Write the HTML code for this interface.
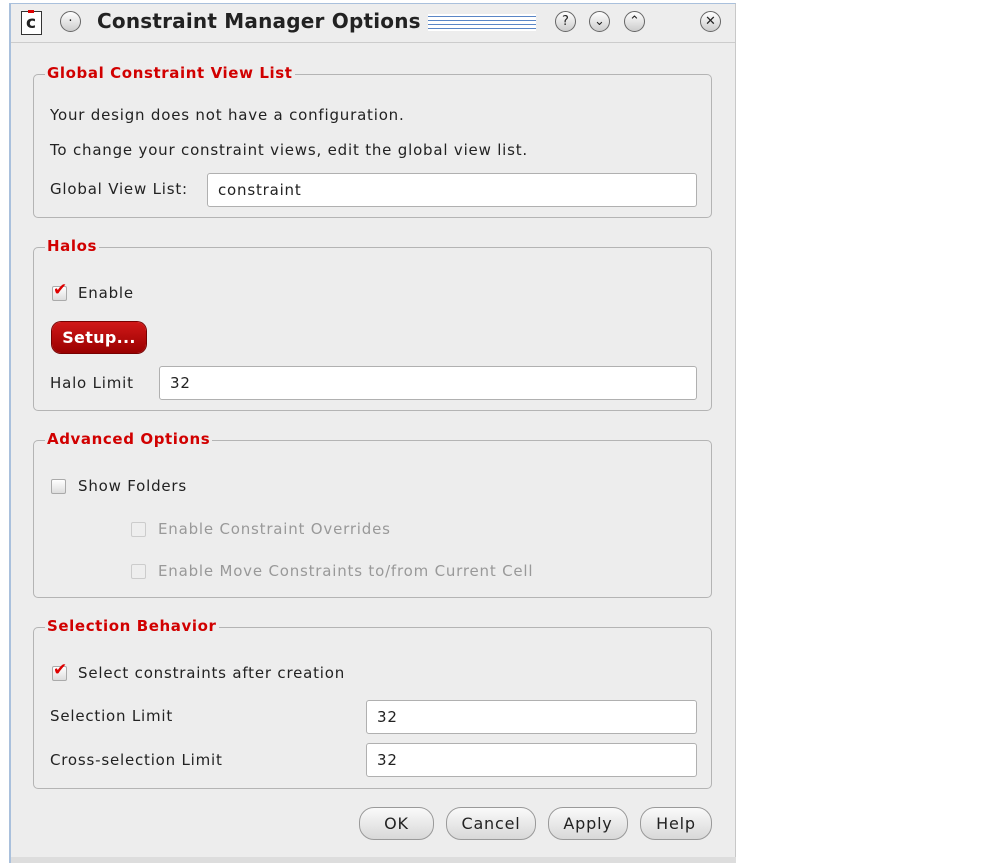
<!DOCTYPE html>
<html><head><style>
body{margin:0;width:992px;height:868px;background:#fff;position:relative;font-family:"DejaVu Sans","Liberation Sans",sans-serif;font-size:15px;color:#222;overflow:hidden;letter-spacing:0.8px}
.a{position:absolute}
#win{left:9px;top:3px;width:727px;height:860px;background:#ededed;border-left:2px solid #a9c0dc;border-right:1px solid #c8c8c8;border-top:1px solid #a9c0dc;box-sizing:border-box}
.grp{position:absolute;left:33px;width:679px;border:1px solid #b4b4b4;border-radius:5px;box-sizing:border-box}
.lg{position:absolute;left:45px;background:#ededed;color:#d10000;font-weight:bold;font-size:15px;padding:0 2px;letter-spacing:0.6px}
.in{position:absolute;background:#fff;border:1px solid #b0b0b0;border-radius:3px;height:34px;box-sizing:border-box;padding:7px 0 0 10px;font-size:15px}
.cb{position:absolute;width:15px;height:15px;border:1px solid #aaa;border-radius:2px;background:linear-gradient(#fff,#ddd);box-sizing:border-box}
.dis{color:#999}
.btn{position:absolute;top:807px;height:33px;border:1px solid #9a9a9a;border-radius:15px;background:linear-gradient(#fafafa,#d8d8d8);box-sizing:border-box;text-align:center;line-height:31px;font-size:16px}
.ci{position:absolute;top:11px;width:21px;height:21px;border:1px solid #666;border-radius:50%;box-sizing:border-box;background:linear-gradient(#fff,#ccc);text-align:center;font-size:13px;line-height:19px;letter-spacing:0}
</style></head><body>
<div id="win" class="a"></div>
<div class="a" style="left:21px;top:11px;width:19px;height:22px;border:1px solid #333;background:#fff;font-weight:bold;font-size:17px;text-align:center;line-height:22px">c</div>
<div class="a" style="left:28px;top:10px;width:6px;height:3px;background:#d00"></div>
<div class="ci" style="left:60px">·</div>
<div class="a" style="left:97px;top:9px;font-weight:bold;font-size:20px;color:#222;letter-spacing:0.2px">Constraint Manager Options</div>
<div class="a" style="left:428px;top:14px;width:108px;height:17px;background:repeating-linear-gradient(#fff 0 2px,#5a86c6 2px 3px,#fff 3px 4px)"></div>
<div class="ci" style="left:555px">?</div>
<div class="ci" style="left:589px">⌄</div>
<div class="ci" style="left:624px">⌃</div>
<div class="ci" style="left:700px">✕</div>
<div class="a" style="left:11px;top:42px;width:724px;height:1px;background:#ccc"></div>

<div class="grp" style="top:74px;height:144px"></div>
<div class="lg" style="top:64px">Global Constraint View List</div>
<div class="a" style="left:50px;top:106px">Your design does not have a configuration.</div>
<div class="a" style="left:50px;top:141px">To change your constraint views, edit the global view list.</div>
<div class="a" style="left:50px;top:180px">Global View List:</div>
<div class="in" style="left:207px;top:173px;width:490px">constraint</div>

<div class="grp" style="top:247px;height:164px"></div>
<div class="lg" style="top:237px">Halos</div>
<div class="cb" style="left:52px;top:286px"></div>
<div class="a" style="left:53px;top:280px;color:#d00;font-size:17px;font-weight:bold">✔</div>
<div class="a" style="left:78px;top:284px">Enable</div>
<div class="a" style="left:52px;top:322px;width:94px;height:31px;border-radius:9px;background:linear-gradient(#d01818,#9a0000);box-shadow:0 0 0 1px #700;color:#fff;font-weight:bold;font-size:16px;text-align:center;line-height:31px;letter-spacing:0.3px">Setup...</div>
<div class="a" style="left:50px;top:374px">Halo Limit</div>
<div class="in" style="left:159px;top:366px;width:538px">32</div>

<div class="grp" style="top:440px;height:158px"></div>
<div class="lg" style="top:430px">Advanced Options</div>
<div class="cb" style="left:51px;top:479px"></div>
<div class="a" style="left:78px;top:477px">Show Folders</div>
<div class="cb" style="left:131px;top:522px;border-color:#ccc;background:#eee"></div>
<div class="a dis" style="left:158px;top:520px">Enable Constraint Overrides</div>
<div class="cb" style="left:131px;top:564px;border-color:#ccc;background:#eee"></div>
<div class="a dis" style="left:158px;top:562px">Enable Move Constraints to/from Current Cell</div>

<div class="grp" style="top:627px;height:162px"></div>
<div class="lg" style="top:617px">Selection Behavior</div>
<div class="cb" style="left:52px;top:666px"></div>
<div class="a" style="left:53px;top:660px;color:#d00;font-size:17px;font-weight:bold">✔</div>
<div class="a" style="left:78px;top:664px">Select constraints after creation</div>
<div class="a" style="left:50px;top:707px">Selection Limit</div>
<div class="in" style="left:366px;top:700px;width:331px">32</div>
<div class="a" style="left:50px;top:751px">Cross-selection Limit</div>
<div class="in" style="left:366px;top:743px;width:331px">32</div>

<div class="btn" style="left:359px;width:75px">OK</div>
<div class="btn" style="left:446px;width:90px">Cancel</div>
<div class="btn" style="left:548px;width:80px">Apply</div>
<div class="btn" style="left:640px;width:72px">Help</div>
<div class="a" style="left:11px;top:857px;width:725px;height:6px;background:#ddd"></div>
</body></html>
